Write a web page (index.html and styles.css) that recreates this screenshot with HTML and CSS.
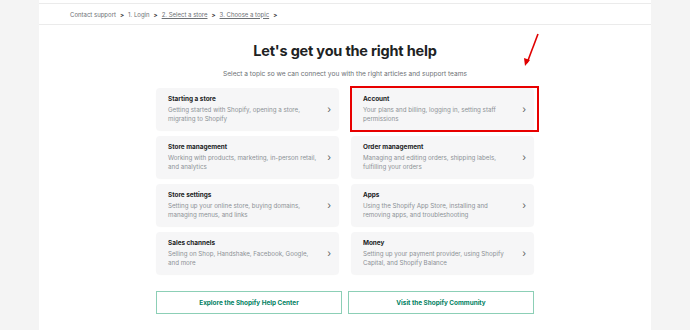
FILE: index.html
```html
<!DOCTYPE html>
<html lang="en">
<head>
    <meta charset="UTF-8">
    <title>Contact support</title>
    <link rel="stylesheet" href="styles.css">
</head>
<body>
    <div class="page">
        <div class="top-bar"></div>

        <!-- Breadcrumb -->
        <nav class="breadcrumb">
            <span>Contact support</span><span class="sep">&gt;</span>
            <span>1. Login</span><span class="sep">&gt;</span>
            <a href="#">2. Select a store</a><span class="sep">&gt;</span>
            <a href="#">3. Choose a topic</a><span class="sep">&gt;</span>
        </nav>

        <main class="content">
            <h1>Let's get you the right help</h1>
            <p class="subtitle">Select a topic so we can connect you with the right articles and support teams</p>

            <svg class="arrow" width="24" height="40" viewBox="0 0 24 40">
                <line x1="19" y1="1" x2="8" y2="30" stroke="#e00000" stroke-width="1.6"/>
                <polygon points="6,33 5,25 11,27" fill="#e00000"/>
            </svg>

            <div class="topics">
                <a class="topic" href="#">
                    <div class="topic-text">
                        <h3>Starting a store</h3>
                        <p>Getting started with Shopify, opening a store, migrating to Shopify</p>
                    </div>
                    <span class="chevron">&rsaquo;</span>
                </a>
                <a class="topic highlighted" href="#">
                    <div class="topic-text">
                        <h3>Account</h3>
                        <p>Your plans and billing, logging in, setting staff permissions</p>
                    </div>
                    <span class="chevron">&rsaquo;</span>
                </a>
                <a class="topic" href="#">
                    <div class="topic-text">
                        <h3>Store management</h3>
                        <p>Working with products, marketing, in-person retail, and analytics</p>
                    </div>
                    <span class="chevron">&rsaquo;</span>
                </a>
                <a class="topic" href="#">
                    <div class="topic-text">
                        <h3>Order management</h3>
                        <p>Managing and editing orders, shipping labels, fulfilling your orders</p>
                    </div>
                    <span class="chevron">&rsaquo;</span>
                </a>
                <a class="topic" href="#">
                    <div class="topic-text">
                        <h3>Store settings</h3>
                        <p>Setting up your online store, buying domains, managing menus, and links</p>
                    </div>
                    <span class="chevron">&rsaquo;</span>
                </a>
                <a class="topic" href="#">
                    <div class="topic-text">
                        <h3>Apps</h3>
                        <p>Using the Shopify App Store, installing and removing apps, and troubleshooting</p>
                    </div>
                    <span class="chevron">&rsaquo;</span>
                </a>
                <a class="topic" href="#">
                    <div class="topic-text">
                        <h3>Sales channels</h3>
                        <p>Selling on Shop, Handshake, Facebook, Google, and more</p>
                    </div>
                    <span class="chevron">&rsaquo;</span>
                </a>
                <a class="topic" href="#">
                    <div class="topic-text">
                        <h3>Money</h3>
                        <p>Setting up your payment provider, using Shopify Capital, and Shopify Balance</p>
                    </div>
                    <span class="chevron">&rsaquo;</span>
                </a>
            </div>

            <div class="actions">
                <a class="outline-btn" href="#">Explore the Shopify Help Center</a>
                <a class="outline-btn" href="#">Visit the Shopify Community</a>
            </div>
        </main>
    </div>
</body>
</html>
```

FILE: styles.css
```css
* {
    margin: 0;
    padding: 0;
    box-sizing: border-box;
}

body {
    font-family: Inter, "Noto Sans", Arial, sans-serif;
    background-color: #f4f4f4;
    display: flex;
    justify-content: center;
    height: 330px;
    overflow: hidden;
}

.page {
    width: 612px;
    background-color: #ffffff;
}

.top-bar {
    height: 4px;
    border-bottom: 1px solid #ebebeb;
}

.breadcrumb {
    height: 21px;
    display: flex;
    align-items: center;
    padding-left: 31px;
    font-size: 6px;
    color: #6d7175;
    border-bottom: 1px solid #ebebeb;
}

.breadcrumb a {
    color: #6d7175;
    text-decoration: underline;
}

.breadcrumb .sep {
    font-weight: 700;
    color: #303030;
    margin: 0 4px;
}

.content {
    position: relative;
    display: flex;
    flex-direction: column;
    align-items: center;
    padding-top: 17px;
}

h1 {
    font-size: 14.5px;
    font-weight: 700;
    color: #202223;
    letter-spacing: -0.2px;
    line-height: 18px;
}

.subtitle {
    margin-top: 10px;
    font-size: 6.6px;
    line-height: 8px;
    color: #6d7175;
}

.arrow {
    position: absolute;
    left: 480px;
    top: 8px;
}

.topics {
    margin-top: 10px;
    width: 378px;
    display: grid;
    grid-template-columns: 183px 183px;
    column-gap: 12px;
    row-gap: 6px;
}

.topic {
    position: relative;
    height: 42px;
    display: flex;
    align-items: center;
    padding: 0 8px 0 12px;
    background-color: #f6f6f7;
    border-radius: 4px;
    box-shadow: 0 1px 1px rgba(0, 0, 0, 0.04);
    text-decoration: none;
}

.topic-text {
    flex: 1;
}

.topic h3 {
    font-size: 6.4px;
    font-weight: 700;
    color: #202223;
    margin-bottom: 2px;
}

.topic p {
    font-size: 6.2px;
    line-height: 9.5px;
    color: #8c9196;
    padding-right: 10px;
}

.chevron {
    font-size: 10px;
    color: #5c5f62;
}

.highlighted::after {
    content: "";
    position: absolute;
    left: -1px;
    top: -2px;
    right: -5px;
    bottom: -2px;
    border: 2px solid #e80000;
}

.actions {
    margin-top: 17px;
    width: 378px;
    display: flex;
    gap: 6px;
}

.outline-btn {
    flex: 1;
    height: 23px;
    display: flex;
    align-items: center;
    justify-content: center;
    border: 1px solid #8ccfb6;
    font-size: 6.4px;
    font-weight: 700;
    color: #007f5f;
    text-decoration: none;
}
```
